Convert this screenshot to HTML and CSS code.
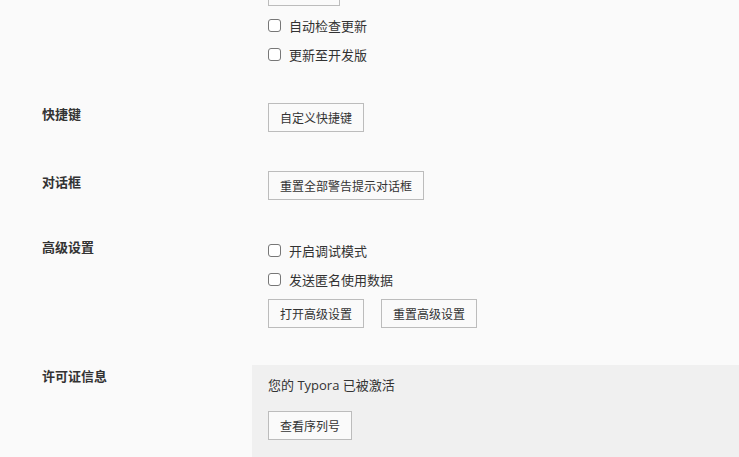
FILE: index.html
```html
<!DOCTYPE html>
<html lang="zh-CN">
<head>
<meta charset="utf-8">
<title>偏好设置</title>
<link rel="stylesheet" href="styles.css">
</head>
<body>
<main class="prefs">
  <section class="pref pref--update">
    <div class="pref-label">更新</div>
    <div class="pref-body">
      <button class="btn">检查更新</button>
      <label class="check"><span class="box"></span>自动检查更新</label>
      <label class="check"><span class="box"></span>更新至开发版</label>
    </div>
  </section>

  <section class="pref pref--shortcut">
    <div class="pref-label">快捷键</div>
    <div class="pref-body">
      <button class="btn">自定义快捷键</button>
    </div>
  </section>

  <section class="pref pref--dialog">
    <div class="pref-label">对话框</div>
    <div class="pref-body">
      <button class="btn">重置全部警告提示对话框</button>
    </div>
  </section>

  <section class="pref pref--advanced">
    <div class="pref-label">高级设置</div>
    <div class="pref-body">
      <label class="check"><span class="box"></span>开启调试模式</label>
      <label class="check"><span class="box"></span>发送匿名使用数据</label>
      <div class="btn-row">
        <button class="btn">打开高级设置</button>
        <button class="btn">重置高级设置</button>
      </div>
    </div>
  </section>

  <section class="pref pref--license">
    <div class="pref-label">许可证信息</div>
    <div class="pref-body license">
      <p class="license-text">您的 Typora 已被激活</p>
      <button class="btn">查看序列号</button>
    </div>
  </section>
</main>
</body>
</html>
```

FILE: styles.css
```css
html, body {
  margin: 0;
  padding: 0;
  background: #fafafa;
  overflow: hidden;
}

body {
  font-family: "Noto Sans CJK SC", "Open Sans", sans-serif;
  color: #333;
  font-size: 13px;
}

.prefs {
  display: flex;
  flex-direction: column;
}

.pref {
  display: flex;
  align-items: flex-start;
}

.pref--update { margin-top: -23px; }
.pref--shortcut { margin-top: 34px; }
.pref--dialog { margin-top: 39px; }
.pref--advanced { margin-top: 36px; }
.pref--license { margin-top: 37px; }

.pref-label {
  width: 210px;
  padding-left: 42px;
  padding-top: 1px;
  line-height: 20px;
  font-size: 13px;
  font-weight: bold;
  color: #333;
  flex: none;
}

.pref-body {
  flex: 1;
  display: flex;
  flex-direction: column;
  align-items: flex-start;
  padding-left: 16px;
}

.btn {
  height: 29px;
  box-sizing: border-box;
  padding: 0 11px;
  border: 1px solid #bcbcbc;
  background: #fafafa;
  font-family: "Noto Sans CJK SC", sans-serif;
  font-size: 12px;
  line-height: 27px;
  color: #333;
  border-radius: 0;
}

.btn + .check,
.check + .btn-row {
  margin-top: 5px;
}

.btn-row {
  display: flex;
  gap: 17px;
}

.check {
  height: 29px;
  display: flex;
  align-items: center;
  gap: 8px;
  font-size: 13px;
  color: #333;
}

.box {
  width: 13px;
  height: 13px;
  box-sizing: border-box;
  border: 1px solid #777;
  border-radius: 3px;
  background: #fff;
}

.license {
  background: #f0f0f0;
  padding-top: 10px;
  padding-bottom: 40px;
  gap: 16px;
}

.license-text {
  margin: 0;
  line-height: 20px;
  font-size: 13px;
  font-family: "Open Sans", "Noto Sans CJK SC", sans-serif;
}
```
